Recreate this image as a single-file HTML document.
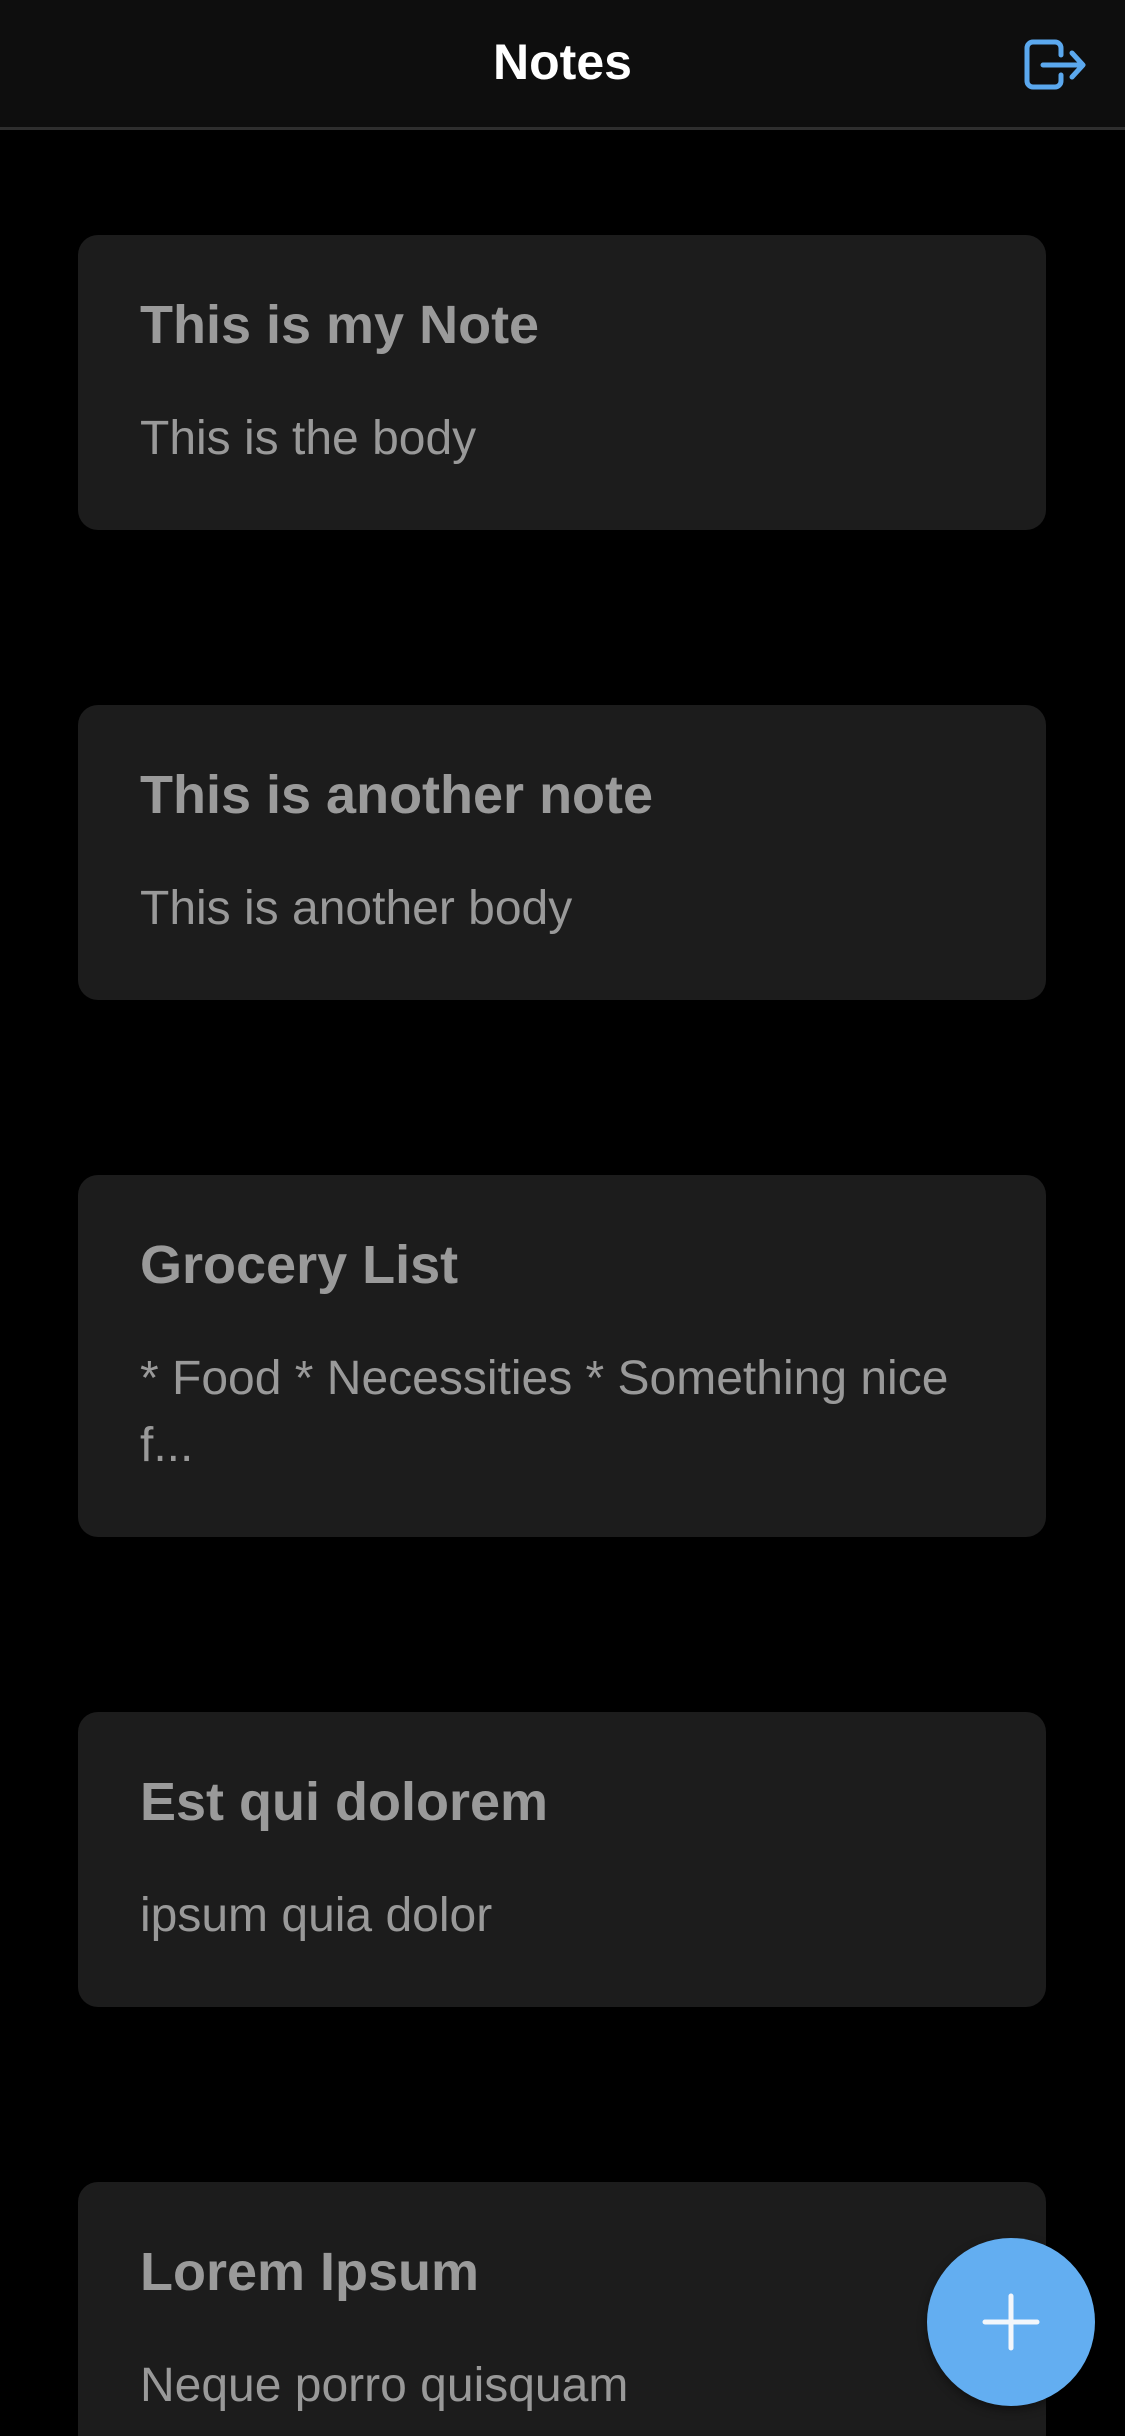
<!DOCTYPE html>
<html><head><meta charset="utf-8"><style>
html,body{margin:0;padding:0;background:#000;width:1125px;height:2436px;overflow:hidden;font-family:"Liberation Sans",Arial,sans-serif}
.wrap{position:relative;width:1125px;height:2436px;overflow:hidden}
.hdr{position:absolute;left:0;top:0;width:1125px;height:130px;background:#0e0e0e;border-bottom:3px solid #2e2e2e;box-sizing:border-box}
.hdr h1{margin:0;position:absolute;left:0;right:0;top:34px;text-align:center;color:#fff;font-size:50px;font-weight:bold;line-height:57px}
.list{position:absolute;left:78px;top:235px;width:968px}
.card{background:#1c1c1c;border-radius:20px;padding:60px 62px 58px 62px;margin-bottom:175px}
.card:last-child{margin-bottom:0}
.t{color:#9a9a9a;font-size:54px;font-weight:bold;line-height:60px;white-space:nowrap}
.b{color:#999;font-size:48px;line-height:67px;margin-top:50px}
.fab{position:absolute;left:927px;top:2238px;width:168px;height:168px;border-radius:50%;background:#63aef1;box-shadow:0 4px 10px rgba(0,0,0,.4)}
</style></head><body><div class="wrap">
<div class="hdr"><h1>Notes</h1>
<svg style="position:absolute;left:1020px;top:36px" width="72" height="58" viewBox="1020 36 72 58" fill="none" stroke="#5ba8ee" stroke-width="5" stroke-linecap="round" stroke-linejoin="round">
<path d="M1061 55 V48 a6 6 0 0 0 -6 -6 H1033 a6 6 0 0 0 -6 6 V81 a6 6 0 0 0 6 6 H1055 a6 6 0 0 0 6 -6 V75"/>
<path d="M1043 65 H1083 M1072 53 L1083 65 L1072 77"/>
</svg></div>
<div class="list">
<div class="card"><div class="t">This is my Note</div><div class="b">This is the body</div></div>
<div class="card"><div class="t">This is another note</div><div class="b">This is another body</div></div>
<div class="card"><div class="t">Grocery List</div><div class="b">* Food * Necessities * Something nice<br>f...</div></div>
<div class="card"><div class="t">Est qui dolorem</div><div class="b">ipsum quia dolor</div></div>
<div class="card"><div class="t">Lorem Ipsum</div><div class="b">Neque porro quisquam</div></div>
</div>
<div class="fab"><svg width="168" height="168" viewBox="0 0 168 168" stroke="#f2f6fb" stroke-width="5" stroke-linecap="round"><path d="M84 58 V110 M58 84 H110"/></svg></div>
</div></body></html>
